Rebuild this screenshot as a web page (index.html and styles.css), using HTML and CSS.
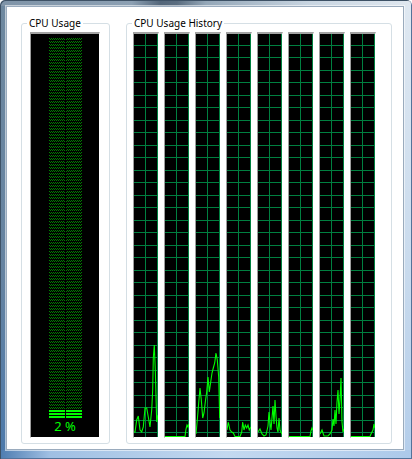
FILE: index.html
```html
<!DOCTYPE html>
<html lang="en">
<head>
<meta charset="utf-8">
<title>Performance</title>
<link rel="stylesheet" href="styles.css">
</head>
<body>
<div class="window">
  <div class="client">
    <fieldset class="group group-usage">
      <legend>CPU Usage</legend>
      <div class="meter">
        <svg class="meter-bars" width="33" height="380" viewBox="0 0 33 380" shape-rendering="crispEdges">
          <defs>
            <pattern id="dots" width="2" height="3" patternUnits="userSpaceOnUse">
              <rect x="0" y="0" width="1" height="1" fill="#008000"/>
              <rect x="1" y="1" width="1" height="1" fill="#008000"/>
            </pattern>
          </defs>
          <rect x="0" y="0" width="16" height="372" fill="url(#dots)"/>
          <rect x="17" y="0" width="16" height="372" fill="url(#dots)"/>
          <g fill="#00ff00">
            <rect x="0" y="372" width="16" height="2"/>
            <rect x="17" y="372" width="16" height="2"/>
            <rect x="0" y="375" width="16" height="2"/>
            <rect x="17" y="375" width="16" height="2"/>
            <rect x="0" y="378" width="16" height="2"/>
            <rect x="17" y="378" width="16" height="2"/>
          </g>
        </svg>
        <div class="meter-value">2 %</div>
      </div>
    </fieldset>
    <fieldset class="group group-history">
      <legend>CPU Usage History</legend>
      <div class="graphs">
        <div class="graph">
          <svg width="24" height="403" viewBox="0 0 24 403">
            <defs>
              <pattern id="grid" width="12" height="25" patternUnits="userSpaceOnUse">
                <rect x="11" y="0" width="1" height="25" fill="#008040" shape-rendering="crispEdges"/>
                <rect x="0" y="11" width="12" height="1" fill="#008040" shape-rendering="crispEdges"/>
                <rect x="0" y="23" width="12" height="1" fill="#008040" shape-rendering="crispEdges"/>
              </pattern>
            </defs>
            <rect width="24" height="403" fill="url(#grid)"/>
            <polyline class="trace" points="0,398 1,398 2.7,386 4.3,382 6,396 7.7,398 9.3,393 11,374 12.7,374 14.3,383 16,393 17.7,376 18.7,356 19.3,324 20.3,311 21.3,336 22.7,388 24,381"/>
          </svg>
        </div>
        <div class="graph">
          <svg width="24" height="403" viewBox="0 0 24 403">
            <rect width="24" height="403" fill="url(#grid)"/>
            <polyline class="trace" points="0,402.5 20,402.5 21,395 22,391 23,393 24,390"/>
          </svg>
        </div>
        <div class="graph">
          <svg width="24" height="403" viewBox="0 0 24 403">
            <rect width="24" height="403" fill="url(#grid)"/>
            <polyline class="trace" points="0,400 1.3,386 2.7,369 4,354 5.3,366 6.7,384 8,379 9.3,368 10.7,358 12,343 13.3,358 14.7,348 16,339 17.3,334 18.7,329 20,319 21.3,326 22.7,343 23.7,384 24,380"/>
          </svg>
        </div>
        <div class="graph">
          <svg width="24" height="403" viewBox="0 0 24 403">
            <rect width="24" height="403" fill="url(#grid)"/>
            <polyline class="trace" points="0,396 1.3,388 3,396 4.7,398 6.3,399 8,402.5 13,402.5 14.7,398 15.7,388 17,396 18.3,391 19.7,394 21,391 22.3,396 24,393"/>
          </svg>
        </div>
        <div class="graph">
          <svg width="24" height="403" viewBox="0 0 24 403">
            <rect width="24" height="403" fill="url(#grid)"/>
            <polyline class="trace" points="0,398 2,395 4,400 6,402 8,401 10,392 11,378 12,388 13,396 14,384 15,372 16,390 17,366 18,382 19,394 20,398 21,384 22,396 24,400"/>
          </svg>
        </div>
        <div class="graph">
          <svg width="24" height="403" viewBox="0 0 24 403">
            <rect width="24" height="403" fill="url(#grid)"/>
            <polyline class="trace" points="0,402.5 21,402.5 22,397 23,394 24,396"/>
          </svg>
        </div>
        <div class="graph">
          <svg width="24" height="403" viewBox="0 0 24 403">
            <rect width="24" height="403" fill="url(#grid)"/>
            <polyline class="trace" points="0,400 2,396 4,402 8,402 10,400 12,396 13,385 14,392 15,376 16,390 17,368 18,356 19,380 20,366 21,344 22,388 23,398 24,395"/>
          </svg>
        </div>
        <div class="graph">
          <svg width="24" height="403" viewBox="0 0 24 403">
            <rect width="24" height="403" fill="url(#grid)"/>
            <polyline class="trace" points="0,402.5 19,402.5 20,400 21,398 22,396 23,390 24,394"/>
          </svg>
        </div>
      </div>
    </fieldset>
  </div>
</div>
</body>
</html>
```

FILE: styles.css
```css
html, body {
  margin: 0;
  padding: 0;
}

body {
  width: 412px;
  height: 459px;
  overflow: hidden;
  background: #ffffff;
  font-family: "Noto Sans", "Open Sans", sans-serif;
}

.window {
  box-sizing: border-box;
  width: 412px;
  height: 459px;
  display: flex;
  padding: 6px 8px 9px 6px;
  border-radius: 5px 5px 0 0;
  background:
    linear-gradient(to right, #7f94a8 0%, #8ca0b3 32%, #53667a 39%, #5a6d80 43%, #94a7b8 50%, #c8d5e1 75%, #e0e8f0 100%) top / 100% 6px no-repeat,
    linear-gradient(to right, #4e7cb0 0%, #9fbfe3 12%, #c3d9f0 55%, #acc9ea 100%) bottom / 100% 9px no-repeat,
    linear-gradient(to bottom, #6e889f 0%, #6583a1 60%, #4c79ab 100%) left / 6px 100% no-repeat,
    linear-gradient(to bottom, #dfe8f1 0%, #c8daed 60%, #b3cdea 100%) right / 8px 100% no-repeat;
  box-shadow: inset 1px 1px 0 #3e5266, inset -1px -1px 0 #53739a;
}

.client {
  flex: 1;
  display: flex;
  gap: 16px;
  padding: 9px 11px 5px 14px;
  background: #ffffff;
  border: 1px solid #9aabbd;
  box-shadow: 0 0 0 1px rgba(255, 255, 255, 0.55);
}

.group {
  box-sizing: border-box;
  margin: 0;
  padding: 0;
  min-inline-size: 0;
  border: 1px solid #d5dfe5;
  border-radius: 3px;
  height: 428px;
}

.group legend {
  margin-left: 5px;
  padding: 0 2px;
  font-size: 10px;
  line-height: 14px;
  color: #000000;
}

.group-usage {
  flex: none;
  width: 89px;
}

.group-history {
  flex: 1;
}

.meter {
  box-sizing: border-box;
  height: 406px;
  margin: 2px 9px 0 8px;
  padding-top: 4px;
  display: flex;
  flex-direction: column;
  align-items: center;
  background: #000000;
  border-left: 1px solid #9d9d9d;
  border-top: 2px solid #a3a3a3;
  border-right: 1px solid #ffffff;
  border-bottom: 1px solid #ffffff;
}

.meter-bars {
  display: block;
  flex: none;
}

.meter-value {
  margin-top: 1px;
  font-size: 13px;
  line-height: 15px;
  color: #00ff00;
  white-space: pre;
}

.graphs {
  display: flex;
  gap: 5px;
  margin: 2px 0 0 6px;
}

.graph {
  box-sizing: border-box;
  flex: none;
  width: 26px;
  height: 406px;
  background: #000000;
  border-left: 1px solid #9d9d9d;
  border-top: 2px solid #a3a3a3;
  border-right: 1px solid #ffffff;
  border-bottom: 1px solid #ffffff;
}

.graph svg {
  display: block;
}

.trace {
  fill: none;
  stroke: #00ff00;
  stroke-width: 1.1;
}
```
